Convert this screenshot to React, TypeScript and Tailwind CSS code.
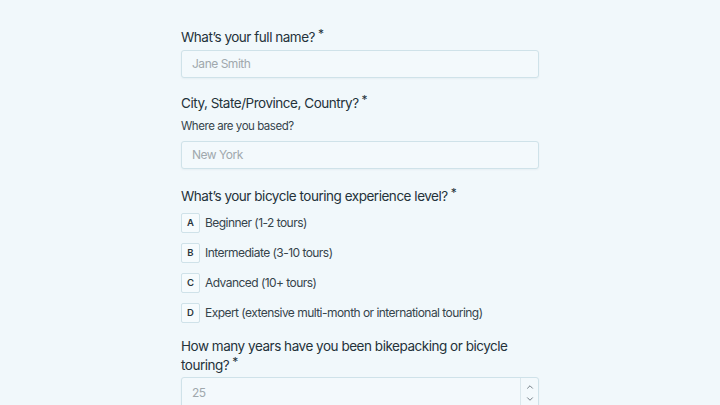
import { ChevronDown, ChevronUp } from "lucide-react";

const options = [
  { key: "A", label: "Beginner (1-2 tours)" },
  { key: "B", label: "Intermediate (3-10 tours)" },
  { key: "C", label: "Advanced (10+ tours)" },
  { key: "D", label: "Expert (extensive multi-month or international touring)" },
];

function Label({ children }: { children: React.ReactNode }) {
  return (
    <div className="text-[13.5px] leading-[19px] tracking-[-0.035em] text-[#24323a]">
      {children}
      <span className="relative -top-[4px] ml-[3px] text-[12px] text-[#24323a]">*</span>
    </div>
  );
}

export default function App() {
  return (
    <div
      className="h-[405px] w-[720px] overflow-hidden bg-[#f1f8fb]"
      style={{ fontFamily: "Inter, 'Noto Sans', sans-serif" }}
    >
      <div className="mx-auto w-[358px] pt-[28px]">
        <Label>What’s your full name?</Label>
        <div className="mt-[3px] flex h-[28px] items-center rounded-[3px] border border-[#cfe2e9] bg-[#f3f9fc] px-[10px] text-[12px] tracking-[-0.04em] text-[#a0a8ad] shadow-[0_1px_2px_rgba(0,60,90,0.05)]">
          Jane Smith
        </div>

        <div className="mt-[16px]">
          <Label>City, State/Province, Country?</Label>
        </div>
        <div className="mt-[4px] text-[11.5px] leading-[18px] tracking-[-0.04em] text-[#36444b]">Where are you based?</div>
        <div className="mt-[6px] flex h-[28px] items-center rounded-[3px] border border-[#cfe2e9] bg-[#f3f9fc] px-[10px] text-[12px] tracking-[-0.04em] text-[#a0a8ad] shadow-[0_1px_2px_rgba(0,60,90,0.05)]">
          New York
        </div>

        <div className="mt-[18px]">
          <Label>What’s your bicycle touring experience level?</Label>
        </div>
        <div className="mt-[7px] flex flex-col gap-[10px]">
          {options.map((o) => (
            <div key={o.key} className="flex items-center gap-[5px]">
              <div className="flex h-[20px] w-[19px] items-center justify-center rounded-[2px] border border-[#cfe2e9] bg-[#f6fbfd] text-[9.5px] font-semibold text-[#2a363c]">
                {o.key}
              </div>
              <span className="text-[12px] tracking-[-0.045em] text-[#36444b]">{o.label}</span>
            </div>
          ))}
        </div>

        <div className="mt-[14px]">
          <Label>How many years have you been bikepacking or bicycle touring?</Label>
        </div>
        <div className="mt-[2px] flex h-[32px] items-stretch rounded-[3px] border border-[#cfe2e9] bg-[#f3f9fc] shadow-[0_1px_2px_rgba(0,60,90,0.05)]">
          <div className="flex flex-1 items-center px-[10px] text-[12px] tracking-[-0.04em] text-[#a0a8ad]">25</div>
          <div className="flex w-[18px] flex-col items-center justify-center gap-[2px] border-l border-[#dbe7ec] text-[#5b6870]">
            <ChevronUp size={10} strokeWidth={2} />
            <ChevronDown size={10} strokeWidth={2} />
          </div>
        </div>
      </div>
    </div>
  );
}
